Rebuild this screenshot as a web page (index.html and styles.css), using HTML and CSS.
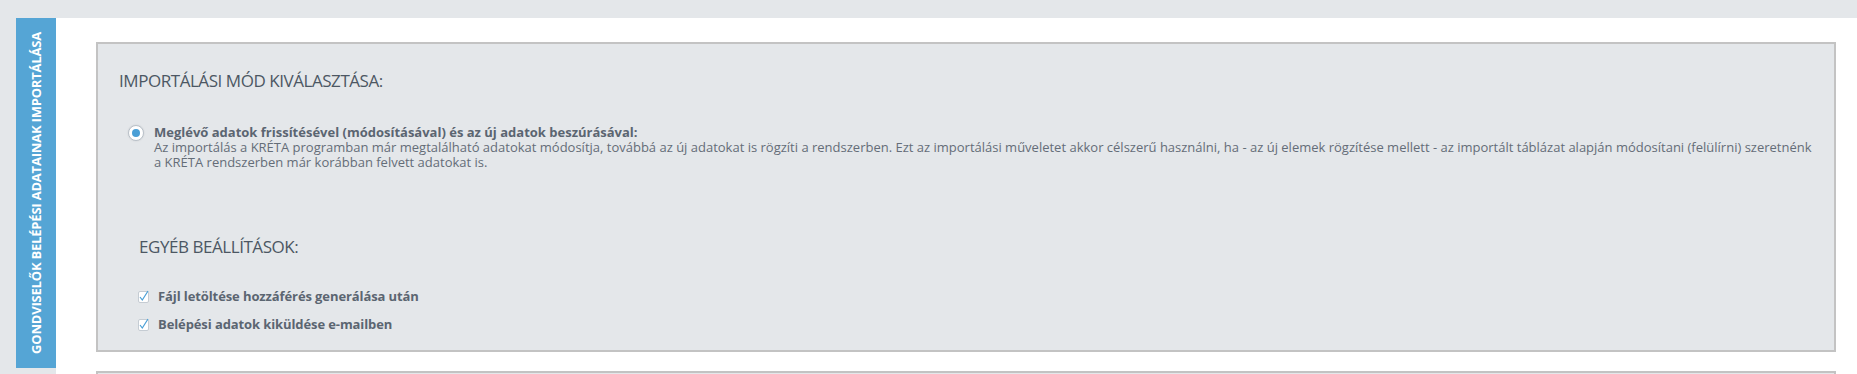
FILE: index.html
```html
<!DOCTYPE html>
<html lang="hu">
<head>
    <meta charset="UTF-8">
    <meta name="viewport" content="width=device-width, initial-scale=1.0">
    <title>Gondviselők belépési adatainak importálása</title>
    <link rel="stylesheet" href="styles.css">
</head>
<body>
    <div class="page">
        <div class="side-tab">
            <span>Gondviselők belépési adatainak importálása</span>
        </div>
        <div class="content">
            <div class="panel">
                <h2 class="panel-title">Importálási mód kiválasztása:</h2>
                <label class="radio-row">
                    <span class="radio checked"></span>
                    <span class="radio-text">
                        <strong>Meglévő adatok frissítésével (módosításával) és az új adatok beszúrásával:</strong>
                        <span class="desc">Az importálás a KRÉTA programban már megtalálható adatokat módosítja, továbbá az új adatokat is rögzíti a rendszerben. Ezt az importálási műveletet akkor célszerű használni, ha - az új elemek rögzítése mellett - az importált táblázat alapján módosítani (felülírni) szeretnénk a KRÉTA rendszerben már korábban felvett adatokat is.</span>
                    </span>
                </label>

                <div class="settings">
                    <h2 class="panel-title">Egyéb beállítások:</h2>
                    <label class="check-row">
                        <span class="check">
                            <svg width="13" height="13" viewBox="0 0 13 13"><path d="M3 8 L5.3 11 L11 2" fill="none" stroke="#4a9fd6" stroke-width="1.2"/></svg>
                        </span>
                        Fájl letöltése hozzáférés generálása után
                    </label>
                    <label class="check-row">
                        <span class="check">
                            <svg width="13" height="13" viewBox="0 0 13 13"><path d="M3 8 L5.3 11 L11 2" fill="none" stroke="#4a9fd6" stroke-width="1.2"/></svg>
                        </span>
                        Belépési adatok kiküldése e-mailben
                    </label>
                </div>
            </div>
            <div class="panel next"></div>
        </div>
    </div>
</body>
</html>
```

FILE: styles.css
```css
body {
    margin: 0;
    background: #e4e7ea;
    font-family: 'Open Sans', sans-serif;
    color: #5b6571;
    overflow: hidden;
}

.page {
    display: flex;
    padding: 18px 0 0 16px;
    height: 374px;
    box-sizing: border-box;
}

.side-tab {
    width: 40px;
    height: 350px;
    flex-shrink: 0;
    background: #55a5d5;
    display: flex;
    align-items: center;
    justify-content: center;
}

.side-tab span {
    display: block;
    white-space: nowrap;
    transform: rotate(-90deg);
    color: #fff;
    font-weight: 700;
    font-size: 13px;
    text-transform: uppercase;
    letter-spacing: -0.2px;
}

.content {
    flex: 1;
    background: #fff;
    padding: 24px 21px 0 40px;
    height: 400px;
}

.panel {
    background: #e4e7ea;
    border: 2px solid #c3c3c3;
    padding: 25px 0 18px 21px;
}

.panel.next {
    margin-top: 19px;
    height: 40px;
}

.panel-title {
    margin: 0;
    font-size: 17px;
    font-weight: 400;
    letter-spacing: -0.45px;
    text-transform: uppercase;
    color: #4c5763;
    line-height: 24px;
}

.radio-row {
    display: flex;
    align-items: flex-start;
    margin: 32px 18px 0 9px;
}

.radio {
    width: 14px;
    height: 14px;
    border: 1px solid #b8c0c8;
    border-radius: 50%;
    background: #fff;
    flex-shrink: 0;
    margin: 0 10px 0 0;
    display: flex;
    align-items: center;
    justify-content: center;
    box-shadow: 0 0 2px rgba(0, 0, 0, 0.1);
}

.radio.checked::after {
    content: '';
    width: 8px;
    height: 8px;
    border-radius: 50%;
    background: #4a9fd6;
}

.radio-text {
    font-size: 13px;
    line-height: 15px;
}

.radio-text strong {
    display: block;
    font-weight: 700;
    color: #5b6571;
}

.desc {
    color: #646d78;
}

.settings {
    margin: 65px 0 0 20px;
}

.settings .panel-title {
    margin-bottom: 29px;
}

.check-row {
    display: flex;
    align-items: center;
    font-size: 13px;
    font-weight: 700;
    letter-spacing: -0.1px;
    color: #5b6571;
    line-height: 16px;
}

.check-row + .check-row {
    margin-top: 12px;
}

.check {
    width: 9px;
    height: 10px;
    border: 1px solid #c5ccd3;
    background: #fff;
    border-radius: 2px;
    margin: 2px 9px 0 -1px;
    position: relative;
    flex-shrink: 0;
}

.check svg {
    position: absolute;
    left: -2px;
    top: -3px;
}
```
